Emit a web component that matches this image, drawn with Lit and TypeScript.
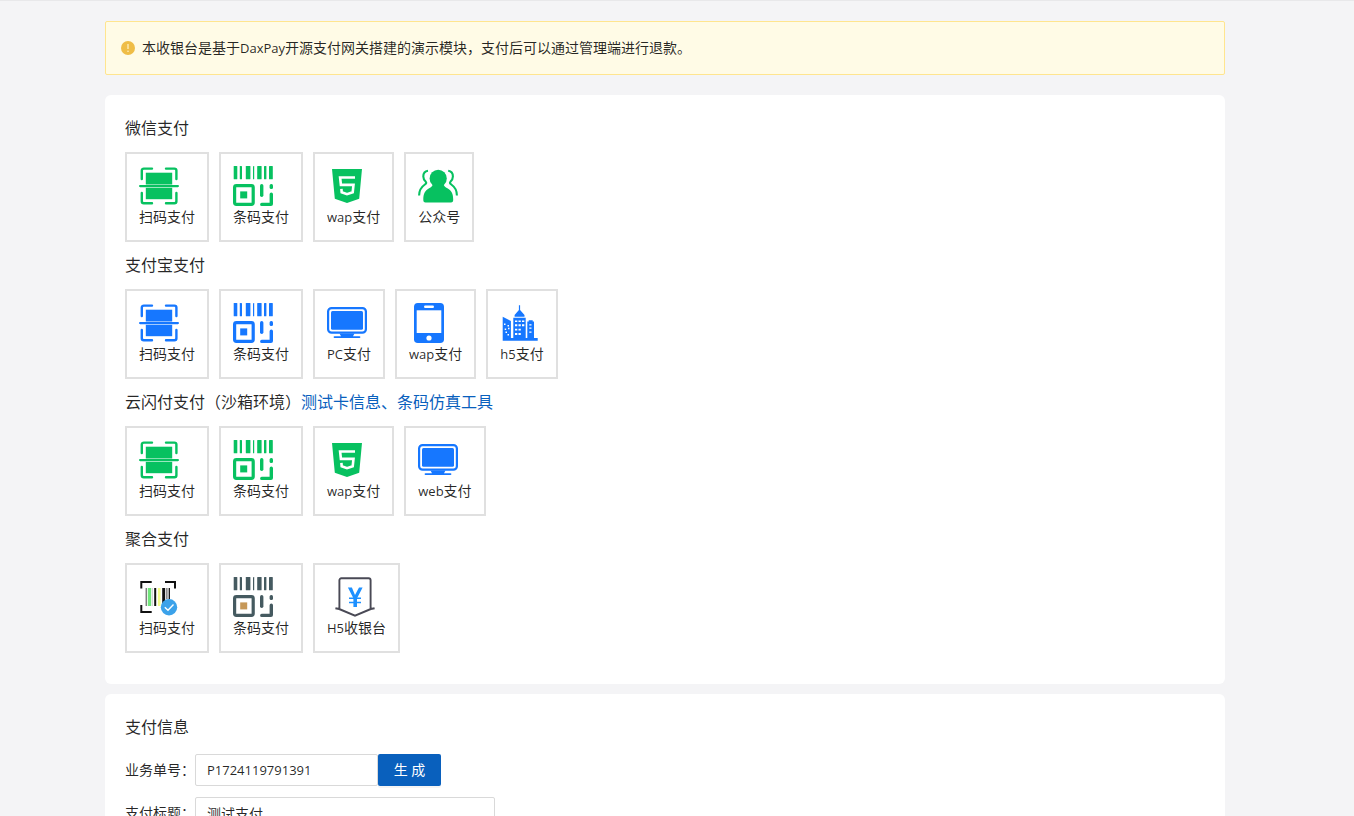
import { LitElement, html, svg, css } from "lit";
import type { TemplateResult } from "lit";
import { customElement, property, state } from "lit/decorators.js";

const GREEN = "#07c160";
const BLUE = "#1677ff";

type IconName = "scan" | "barcode" | "html5" | "people" | "monitor" | "phone" | "city" | "scanColor" | "barcodeColor" | "cashier";

/* Latin runs are set a size smaller than the Chinese glyphs around them. */
const mixed = (text: string) =>
  text
    .split(/([A-Za-z0-9]+)/)
    .filter((part) => part)
    .map((part) => (/^[A-Za-z0-9]+$/.test(part) ? html`<span class="latin">${part}</span>` : part));

const barcode = (color: string, core: string) => svg`
  <g fill=${color}>
    <rect x="0.7" width="3.6" height="13.3" rx="0.6" />
    <rect x="6.8" width="2.2" height="13.3" rx="0.6" />
    <rect x="12.8" width="4.6" height="13.3" rx="0.6" />
    <rect x="20" width="1.2" height="13.3" rx="0.4" />
    <rect x="24.2" width="4.4" height="13.3" rx="0.6" />
    <rect x="31" width="2.4" height="13.3" rx="0.6" />
    <rect x="36" width="3.8" height="13.3" rx="0.6" />
    <rect x="27" y="18" width="3.4" height="13" rx="1.7" />
    <rect x="36.6" y="18" width="3.4" height="5" rx="1.5" />
    <path d="M36.6 28.2a1.7 1.7 0 0 1 3.4 0V38a2 2 0 0 1-2 2h-9.3a1.6 1.6 0 0 1 0-3.2h7.9z" />
  </g>
  <rect x="1.6" y="19.6" width="18.6" height="18.8" rx="1.8" fill="none" stroke=${color} stroke-width="3.2" />
  <rect x="7.2" y="25.4" width="7" height="7" fill=${core} />`;

const ICONS: Record<IconName, (color: string) => TemplateResult<2>> = {
  scan: (c) => svg`
    <path d="M13 2.6H4.800a2 2 0 0 0-2 2V13M27 2.6h8.400a2 2 0 0 1 2 2V13M13 37.2H4.800a2 2 0 0 1-2-2V27M27 37.2h8.400a2 2 0 0 0 2-2V27"
      fill="none" stroke=${c} stroke-width="2.4" stroke-linecap="round" />
    <rect x="6.800" y="6.7" width="26.4" height="11.8" fill=${c} />
    <rect x="6.800" y="21.8" width="26.4" height="11.4" fill=${c} />
    <rect x="0" y="19" width="40" height="2.2" rx="1.1" fill=${c} />`,
  barcode: (c) => barcode(c, c),
  barcodeColor: () => barcode("#455a60", "#c69858"),
  html5: (c) => svg`
    <path d="M5 3H35L32.2 32.8 20 37 7.8 32.8Z" fill=${c} />
    <path d="M28 11.5H13.1L13.9 18.9H26.5L25.7 26.3 20 28.2 14.7 26.3 14.4 22.8" fill="none" stroke="#fff" stroke-width="2.6" />`,
  people: (c) => svg`
    <circle cx="20.2" cy="12.4" r="8.600" fill=${c} />
    <path d="M15 17.500h10.400c.4 2.600 2 3.700 4 4.700 4.400 2.300 5.800 6 5.800 11.300 0 2.200-.6 3-2.200 3H7.500c-1.600 0-2.200-.8-2.200-3 0-5.300 1.400-9 5.800-11.300 2-1 3.500-2.100 3.900-4.700z" fill=${c} />
    <path d="M10 4.700C7.400 5 5.300 7.200 5.300 10.500c0 2.600 1 3.900 2.500 5.300 1 1.200.2 1.900-.9 2.700C3 21.200 1.100 24.300 1.100 29.500" fill="none" stroke=${c} stroke-width="2.100" />
    <path d="M30.200 4.700c2.600.3 4.700 2.500 4.700 5.800 0 2.600-1 3.900-2.500 5.300-1 1.200-.2 1.900.9 2.700 3.900 2.700 5.600 5.800 5.600 11" fill="none" stroke=${c} stroke-width="2.100" />`,
  monitor: (c) => svg`
    <rect x="1.100" y="5.100" width="37.800" height="24.600" rx="3.500" fill="none" stroke=${c} stroke-width="2.200" />
    <rect x="4" y="8" width="32" height="18.700" rx="1.500" fill=${c} />
    <path d="M12.500 30.500h15l-1.500 2.700h6.500a.9.900 0 0 1 0 1.800h-25a.9.900 0 0 1 0-1.800H14z" fill=${c} />`,
  phone: (c) => svg`
    <rect x="5" y="0" width="30" height="40" rx="3.800" fill=${c} />
    <rect x="7.700" y="7.300" width="24.600" height="22.700" fill="#fff" />
    <rect x="15" y="2.500" width="10" height="2.400" rx="1.200" fill="#fff" />
    <circle cx="20" cy="35" r="2.600" fill="#fff" />`,
  city: (c) => svg`
    <path d="M2.700 35V13.700L10.900 18V35h2.400V14.700h12.400V35h1.600V18.600h1.400V17.300h4v1.300h1.300V35h3.700v2.700H2.700z" fill=${c} />
    <path d="M14.600 13.800V12L18.900 6.900V2.300h1.200v4.600L24.500 12v1.800z" fill=${c} />
    <path d="M4 20.500h1.500v1.500H4zM7.500 22h1.500v1.500H7.500zM4.700 25.500h1.500V27H4.700zM8 24.800h1.500v1.500H8zM5.500 28.500H7V30H5.500zM7.500 31h1.500v1.500H7.500zM15 17.500h2.300V19H15zM18.500 17.500h2.300V19h-2.300zM22 17.500h2.300V19H22zM15 21.300h2.300v2H15zM18.500 21.300h2.300v2h-2.300zM22 21.300h2.300v2H22zM15 25.700h2.300v1.700H15zM18.500 25.700h2.300v1.700h-2.300zM15 30h2.300v2H15zM18.500 30h2.300v2h-2.300zM29.300 21.300h2.200v1.200h-2.200zM29.300 24.500h2.200v1.200h-2.200zM29.300 28.500h2.200v1.200h-2.200z" fill="#fff" />`,
  scanColor: () => svg`
    <path d="M12.700 4.900H2.300V11.400M26 4.900H36V11.400M12.700 34.900H2.300V28" fill="none" stroke="#111" stroke-width="2" />
    <path d="M7.200 11V29M27.900 11V22" stroke="#444" stroke-width="1" />
    <path d="M10.500 11V29" stroke="#70e57a" stroke-width="3.400" />
    <path d="M13.400 11V29" stroke="#bbb" stroke-width="0.700" />
    <path d="M16.200 11V29M24.200 11V29" stroke="#111" stroke-width="2" />
    <path d="M25.500 11V24M30.300 11V22" stroke="#111" stroke-width="1.300" />
    <path d="M20.200 11V29" stroke="#f4fb8a" stroke-width="2.600" />
    <circle cx="30" cy="30.200" r="8.200" fill="#3ba2ea" />
    <path d="M25.800 30.200l3.200 3 5.500-5.600" fill="none" stroke="#fff" stroke-width="1.400" />`,
  cashier: () => svg`
    <path d="M4.400 31.500V3.300a2 2 0 0 1 2-2h27.200a2 2 0 0 1 2 2V31.500M.4 31.200l3.800.8L20 38.600 35.800 32l3.800-.8" fill="none" stroke="#494955" stroke-width="1.900" />
    <path d="M12.900 10.500h4L20 18l4-7.500h3.600L23.500 18.500 22 21.200V30h-3.600v-8.800L17 18.500z" fill="#1e90ff" />
    <path d="M14 21.300H26M14 25.600H26" stroke="#1e90ff" stroke-width="1.500" />`,
};

interface Method {
  label: string;
  icon: IconName;
  color?: string;
}

@customElement("pay-method")
export class PayMethod extends LitElement {
  static styles = css`
    :host {
      display: block;
    }
    .tile {
      display: flex;
      flex-direction: column;
      align-items: flex-start;
      padding: 12px;
      border: 2px solid #e0e0e0;
      background: #fff;
      color: rgba(0, 0, 0, 0.85);
      font-family: inherit;
      font-size: 14px;
      line-height: 22px;
      white-space: nowrap;
      cursor: pointer;
    }
    .icon {
      display: block;
      width: 40px;
      height: 40px;
    }
    .icon.wide {
      width: 56px;
    }
    .latin {
      font-size: 13px;
    }
    .label {
      display: block;
      height: 22px;
    }
  `;

  @property({ attribute: false }) method!: Method;

  render() {
    const { label, icon, color = "" } = this.method;
    return html`<button class="tile" type="button">
      <svg class="icon ${icon === "cashier" ? "wide" : ""}" viewBox="0 0 40 40" aria-hidden="true">${ICONS[icon](color)}</svg>
      <span class="label">${mixed(label)}</span>
    </button>`;
  }
}

interface Group {
  title: string;
  links?: string[];
  methods: Method[];
}

const GROUPS: Group[] = [
  {
    title: "微信支付",
    methods: [
      { label: "扫码支付", icon: "scan", color: GREEN },
      { label: "条码支付", icon: "barcode", color: GREEN },
      { label: "wap支付", icon: "html5", color: GREEN },
      { label: "公众号", icon: "people", color: GREEN },
    ],
  },
  {
    title: "支付宝支付",
    methods: [
      { label: "扫码支付", icon: "scan", color: BLUE },
      { label: "条码支付", icon: "barcode", color: BLUE },
      { label: "PC支付", icon: "monitor", color: BLUE },
      { label: "wap支付", icon: "phone", color: BLUE },
      { label: "h5支付", icon: "city", color: BLUE },
    ],
  },
  {
    title: "云闪付支付（沙箱环境）",
    links: ["测试卡信息、", "条码仿真工具"],
    methods: [
      { label: "扫码支付", icon: "scan", color: GREEN },
      { label: "条码支付", icon: "barcode", color: GREEN },
      { label: "wap支付", icon: "html5", color: GREEN },
      { label: "web支付", icon: "monitor", color: BLUE },
    ],
  },
  {
    title: "聚合支付",
    methods: [
      { label: "扫码支付", icon: "scanColor" },
      { label: "条码支付", icon: "barcodeColor" },
      { label: "H5收银台", icon: "cashier" },
    ],
  },
];

@customElement("app-root")
export class AppRoot extends LitElement {
  static styles = css`
    :host {
      display: block;
      box-sizing: border-box;
      min-height: 100vh;
      padding: 20px 24px 20px 0;
      border-top: 1px solid #e8e8ea;
      background: #f4f4f6;
      color: rgba(0, 0, 0, 0.85);
      font-family: "Open Sans", "Noto Sans CJK SC", sans-serif;
      font-size: 14px;
      line-height: 22px;
    }
    .page {
      max-width: 1120px;
      margin: 0 auto;
    }
    .alert {
      display: flex;
      align-items: center;
      gap: 7px;
      margin-bottom: 20px;
      padding: 15px;
      border: 1px solid #ffe58f;
      border-radius: 2px;
      background: #fffbe6;
    }
    .alert-icon {
      flex: none;
      width: 14px;
      height: 14px;
    }
    .alert-text {
      min-height: 22px;
    }
    .latin {
      font-size: 13px;
    }
    .card {
      margin-bottom: 10px;
      padding: 20px 20px 21px;
      border-radius: 6px;
      background: #fff;
    }
    .title {
      margin: 0;
      font-size: 16px;
      font-weight: 400;
      line-height: 26px;
    }
    .methods {
      display: flex;
      flex-wrap: wrap;
      gap: 10px;
      padding: 11px 0 10px;
    }
    a {
      color: #0960bd;
      text-decoration: none;
    }
    .form {
      display: grid;
      gap: 11px;
      padding-top: 14px;
    }
    .row {
      display: flex;
      align-items: center;
    }
    .row label {
      width: 70px;
      white-space: nowrap;
    }
    .field {
      display: flex;
      width: 300px;
    }
    .field.with-button {
      width: 246px;
    }
    input {
      flex: 1;
      box-sizing: border-box;
      min-width: 0;
      height: 32px;
      padding: 4px 11px;
      border: 1px solid #d9d9d9;
      border-radius: 2px;
      background: #fff;
      color: inherit;
      font-family: inherit;
      font-size: 14px;
      line-height: 22px;
      outline: none;
    }
    .number {
      font-size: 13px;
    }
    .generate {
      width: 63px;
      height: 32px;
      padding: 0;
      border: 0;
      border-radius: 2px;
      background: #0960bd;
      box-shadow: 0 2px 0 rgba(0, 0, 0, 0.045);
      color: #fff;
      font-family: inherit;
      font-size: 14px;
      line-height: 22px;
      cursor: pointer;
    }
  `;

  @state() private orderNo = "P1724119791391";
  @state() private subject = "测试支付";

  private generate() {
    this.orderNo = `P${Date.now()}`;
  }

  render() {
    return html`<main class="page">
      <div class="alert" role="alert">
        <svg class="alert-icon" viewBox="0 0 14 14" aria-hidden="true">
          <circle cx="7" cy="7" r="7" fill="#efbd47" />
          <path d="M7 3v5" stroke="#fff3c8" stroke-width="1.200" />
          <circle cx="7" cy="10.200" r="0.800" fill="#fff3c8" />
        </svg>
        <span class="alert-text">${mixed("本收银台是基于DaxPay开源支付网关搭建的演示模块，支付后可以通过管理端进行退款。")}</span>
      </div>
      <section class="card">
        ${GROUPS.map(
          (group) => html`<h2 class="title">${group.title}${group.links?.map((link) => html`<a href="#">${link}</a>`)}</h2>
            <div class="methods">${group.methods.map((method) => html`<pay-method .method=${method}></pay-method>`)}</div>`
        )}
      </section>
      <section class="card">
        <h2 class="title">支付信息</h2>
        <form class="form" @submit=${(event: Event) => event.preventDefault()}>
          <div class="row">
            <label for="order-no">业务单号：</label>
            <div class="field with-button">
              <input id="order-no" class="number" type="text" .value=${this.orderNo} />
              <button class="generate" type="button" @click=${this.generate}>生 成</button>
            </div>
          </div>
          <div class="row">
            <label for="subject">支付标题：</label>
            <div class="field">
              <input id="subject" type="text" .value=${this.subject} />
            </div>
          </div>
        </form>
      </section>
    </main>`;
  }
}
